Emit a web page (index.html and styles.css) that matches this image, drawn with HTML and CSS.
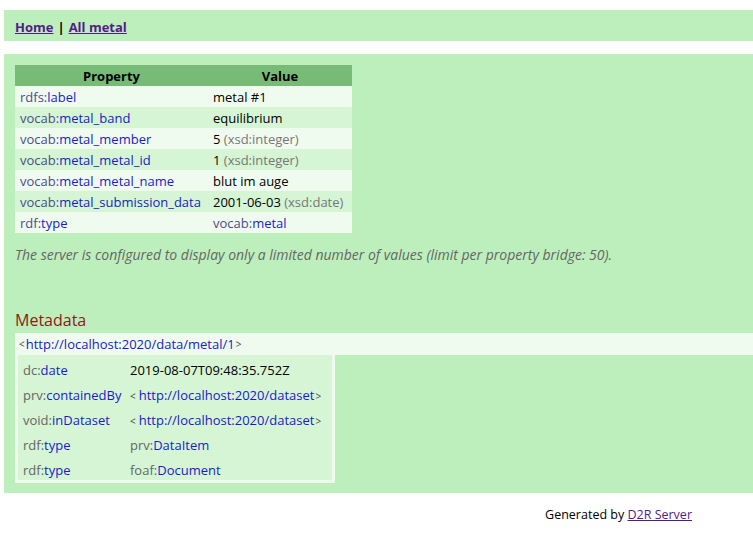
FILE: index.html
```html
<!DOCTYPE html>
<html>
<head>
<meta charset="utf-8">
<title>metal #1 | D2R Server</title>
<link rel="stylesheet" href="styles.css">
</head>
<body>
<div class="nav">
  <a href="#" class="navlink">Home</a> | <a href="#" class="navlink">All metal</a>
</div>
<div class="main">
  <table class="props">
    <thead>
      <tr><th class="c1">Property</th><th class="c2">Value</th></tr>
    </thead>
    <tbody>
      <tr class="odd"><td><span class="pfx">rdfs:</span><a class="ln" href="#">label</a></td><td>metal #1</td></tr>
      <tr class="even"><td><span class="pfx">vocab:</span><a class="ln" href="#">metal_band</a></td><td>equilibrium</td></tr>
      <tr class="odd"><td><span class="pfx">vocab:</span><a class="ln" href="#">metal_member</a></td><td>5 <span class="dt">(xsd:integer)</span></td></tr>
      <tr class="even"><td><span class="pfx">vocab:</span><a class="ln" href="#">metal_metal_id</a></td><td>1 <span class="dt">(xsd:integer)</span></td></tr>
      <tr class="odd"><td><span class="pfx">vocab:</span><a class="ln" href="#">metal_metal_name</a></td><td>blut im auge</td></tr>
      <tr class="even"><td><span class="pfx">vocab:</span><a class="ln" href="#">metal_submission_data</a></td><td>2001-06-03 <span class="dt">(xsd:date)</span></td></tr>
      <tr class="odd"><td><span class="pfx">rdf:</span><a class="ln" href="#">type</a></td><td><span class="pfx">vocab:</span><a class="ln" href="#">metal</a></td></tr>
    </tbody>
  </table>
  <p class="note">The server is configured to display only a limited number of values (limit per property bridge: 50).</p>
  <h2 class="meta-title">Metadata</h2>
  <div class="uri-row"><span class="ang">&lt;</span><a class="ln" href="#">http://localhost:2020/data/metal/1</a><span class="ang">&gt;</span></div>
  <table class="meta">
    <tr><td class="m1"><span class="gp">dc:</span><a class="ln" href="#">date</a></td><td class="m2">2019-08-07T09:48:35.752Z</td></tr>
    <tr><td class="m1"><span class="gp">prv:</span><a class="ln" href="#">containedBy</a></td><td class="m2"><span class="ang">&lt;</span><a class="ln" href="#">http://localhost:2020/dataset</a><span class="ang">&gt;</span></td></tr>
    <tr><td class="m1"><span class="gp">void:</span><a class="ln" href="#">inDataset</a></td><td class="m2"><span class="ang">&lt;</span><a class="ln" href="#">http://localhost:2020/dataset</a><span class="ang">&gt;</span></td></tr>
    <tr><td class="m1"><span class="gp">rdf:</span><a class="ln" href="#">type</a></td><td class="m2"><span class="gp">prv:</span><a class="ln" href="#">DataItem</a></td></tr>
    <tr><td class="m1"><span class="gp">rdf:</span><a class="ln" href="#">type</a></td><td class="m2"><span class="gp">foaf:</span><a class="ln" href="#">Document</a></td></tr>
  </table>
</div>
<div class="footer">Generated by <a href="#" class="flink">D2R Server</a></div>
</body>
</html>
```
FILE: styles.css
```css
html, body {
  margin: 0;
  padding: 0;
  background: #ffffff;
}
body {
  padding: 10px 0 0 4px;
  font-family: "Open Sans", "Noto Sans", sans-serif;
  font-size: 13px;
  color: #000;
}
.nav {
  background: #bdefbd;
  height: 31px;
  box-sizing: border-box;
  padding: 2px 0 0 11px;
  display: flex;
  align-items: center;
  font-weight: bold;
  font-size: 13px;
  gap: 4px;
}
.navlink {
  color: #551a8b;
  text-decoration: underline;
}
.main {
  margin-top: 13px;
  background: #bdefbd;
  padding: 11px 0 10px 11px;
}
.props {
  border-collapse: collapse;
  width: 337px;
}
.props th {
  background: #77bb77;
  height: 21px;
  padding: 0;
  font-weight: bold;
  text-align: center;
}
.props th.c1 { width: 193px; }
.props td {
  height: 21px;
  padding: 0 0 0 5px;
  white-space: nowrap;
}
.props tr.odd td { background: #f0fbf0; }
.props tr.even td { background: #d5f5d5; }
.pfx { color: #4c4c8c; }
.gp { color: #666666; }
.ln {
  color: #1a1acc;
  text-decoration: none;
}
.dt { color: #777777; }
.note {
  margin: 12px 0 0 0;
  font-size: 14px;
  font-style: italic;
  color: #666666;
}
.meta-title {
  margin: 45px 0 0 0;
  font-size: 16px;
  font-weight: normal;
  color: #8b1a1a;
  height: 24px;
}
.uri-row {
  background: #f0fbf0;
  height: 22px;
  display: flex;
  align-items: center;
  padding-left: 4px;
}
.ang {
  color: #444;
  font-size: 10px;
  margin-right: 1px;
}
.ln + .ang {
  margin: 0 0 0 1px;
}
.meta {
  border: 3px solid #f0fbf0;
  border-top: 0;
  background: #d5f5d5;
  border-collapse: collapse;
  width: 320px;
}
.meta td {
  height: 21px;
  padding: 4px 0 0 0;
  white-space: nowrap;
}
.meta td.m1 {
  padding-left: 5px;
  width: 107px;
}
.meta td.m2 .ang:first-child {
  margin-right: 3px;
}
.footer {
  text-align: right;
  padding: 13px 61px 0 0;
  font-size: 12.5px;
}
.flink {
  color: #551a8b;
  text-decoration: underline;
}
```
